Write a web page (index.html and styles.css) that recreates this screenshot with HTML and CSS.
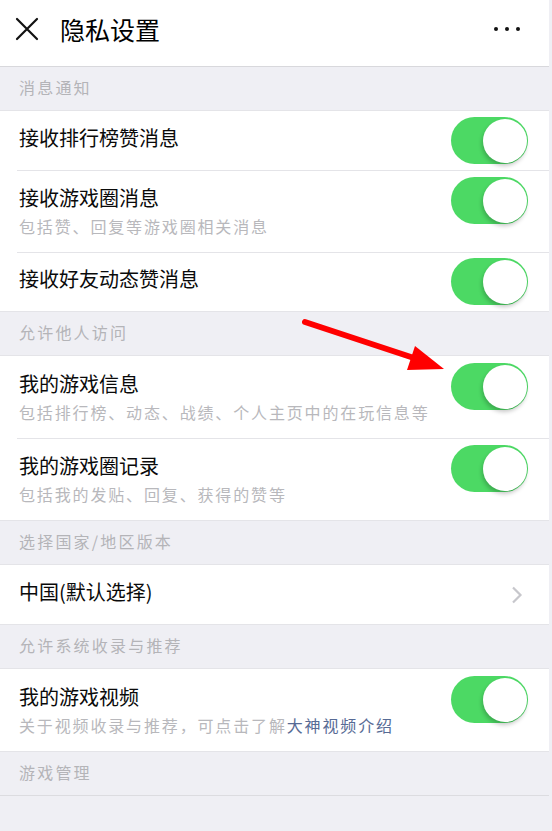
FILE: index.html
```html
<!DOCTYPE html>
<html lang="zh-CN">
<head>
<meta charset="utf-8">
<title>隐私设置</title>
<link rel="stylesheet" href="styles.css">
</head>
<body>
<div class="page">
  <header class="topbar">
    <svg class="close" width="24" height="24" viewBox="0 0 24 24"><path d="M2 2 L22 22 M22 2 L2 22" stroke="#111" stroke-width="2.2" fill="none" stroke-linecap="round"/></svg>
    <h1 class="title">隐私设置</h1>
    <div class="more"><span></span><span></span><span></span></div>
  </header>

  <div class="section-title">消息通知</div>
  <div class="group">
    <div class="row single"><div class="texts"><div class="main">接收排行榜赞消息</div></div><div class="switch"><div class="knob"></div></div></div>
    <div class="row double"><div class="texts"><div class="main">接收游戏圈消息</div><div class="sub">包括赞、回复等游戏圈相关消息</div></div><div class="switch"><div class="knob"></div></div></div>
    <div class="row single"><div class="texts"><div class="main">接收好友动态赞消息</div></div><div class="switch"><div class="knob"></div></div></div>
  </div>

  <div class="section-title">允许他人访问</div>
  <div class="group">
    <div class="row double"><div class="texts"><div class="main">我的游戏信息</div><div class="sub">包括排行榜、动态、战绩、个人主页中的在玩信息等</div></div><div class="switch"><div class="knob"></div></div></div>
    <div class="row double"><div class="texts"><div class="main">我的游戏圈记录</div><div class="sub">包括我的发贴、回复、获得的赞等</div></div><div class="switch"><div class="knob"></div></div></div>
  </div>

  <div class="section-title">选择国家/地区版本</div>
  <div class="group">
    <div class="row single"><div class="texts"><div class="main">中国(默认选择)</div></div>
      <svg class="chevron" width="12" height="18" viewBox="0 0 12 18"><path d="M2 1.5 L9.5 9 L2 16.5" stroke="#c7c7cc" stroke-width="2.2" fill="none"/></svg>
    </div>
  </div>

  <div class="section-title">允许系统收录与推荐</div>
  <div class="group">
    <div class="row double"><div class="texts"><div class="main">我的游戏视频</div><div class="sub">关于视频收录与推荐，可点击了解<span class="link">大神视频介绍</span></div></div><div class="switch"><div class="knob"></div></div></div>
  </div>

  <div class="section-title last">游戏管理</div>

  <svg class="arrow" width="552" height="831" viewBox="0 0 552 831">
    <line x1="305" y1="322" x2="420" y2="360" stroke="#ff0000" stroke-width="6" stroke-linecap="round"/>
    <polygon points="415,346 407,370 444,369" fill="#ff0000"/>
  </svg>
</div>
</body>
</html>
```

FILE: styles.css
```css
* { box-sizing: border-box; }
html, body { margin: 0; padding: 0; }
body {
  background: #efeff4;
  font-family: "Noto Sans CJK SC", "Noto Sans", sans-serif;
  color: #000;
}
.page {
  position: relative;
  width: 549px;
  min-height: 831px;
  background: #efeff4;
}
.topbar {
  height: 67px;
  background: #fff;
  border-bottom: 1px solid #d8d8dc;
  display: flex;
  align-items: center;
  padding: 0 0 8px 15px;
}
.close { flex: none; margin-right: 21px; }
.title {
  margin: 0;
  font-size: 25px;
  font-weight: 400;
  line-height: 30px;
  flex: 1;
}
.more {
  display: flex;
  gap: 7px;
  margin-right: 29px;
}
.more span {
  width: 4px;
  height: 4px;
  border-radius: 50%;
  background: #111;
}
.section-title {
  height: 43px;
  display: flex;
  align-items: center;
  padding: 0 0 4px 19px;
  font-size: 16px;
  letter-spacing: 2.2px;
  color: #b4b4b8;
}
.section-title.last {
  height: 44px;
  border-bottom: 1px solid #dcdce0;
}
.group {
  background: #fff;
  border-top: 1px solid #e4e4e8;
  border-bottom: 1px solid #e4e4e8;
}
.row {
  display: flex;
  align-items: center;
  padding: 0 21px 0 19px;
  position: relative;
}
.row + .row::before {
  content: "";
  position: absolute;
  left: 17px;
  right: 0;
  top: 0;
  border-top: 1px solid #e4e4e8;
}
.row.single { height: 59px; }
.row.single .texts { margin-top: -5px; }
.row.double { height: 82px; align-items: flex-start; }
.row.double .texts { padding-top: 14px; }
.row.double .switch { margin-top: 7px; }
.texts { flex: 1; }
.main {
  font-size: 20px;
  line-height: 28px;
  color: #0a0a0a;
}
.sub {
  font-size: 16px;
  letter-spacing: 1.85px;
  line-height: 29px;
  color: #b8b8bc;
  white-space: nowrap;
}
.link { color: #576b95; }
.switch {
  flex: none;
  width: 77px;
  height: 47px;
  border-radius: 24px;
  background: #4cd964;
  position: relative;
}
.knob {
  position: absolute;
  right: 1.5px;
  top: 1.5px;
  width: 44px;
  height: 44px;
  border-radius: 50%;
  background: #fff;
  box-shadow: -1px 3px 4px rgba(0,0,0,0.22);
}
.chevron { flex: none; margin-right: 5px; }
.arrow {
  position: absolute;
  left: 0;
  top: 0;
  pointer-events: none;
}
```
